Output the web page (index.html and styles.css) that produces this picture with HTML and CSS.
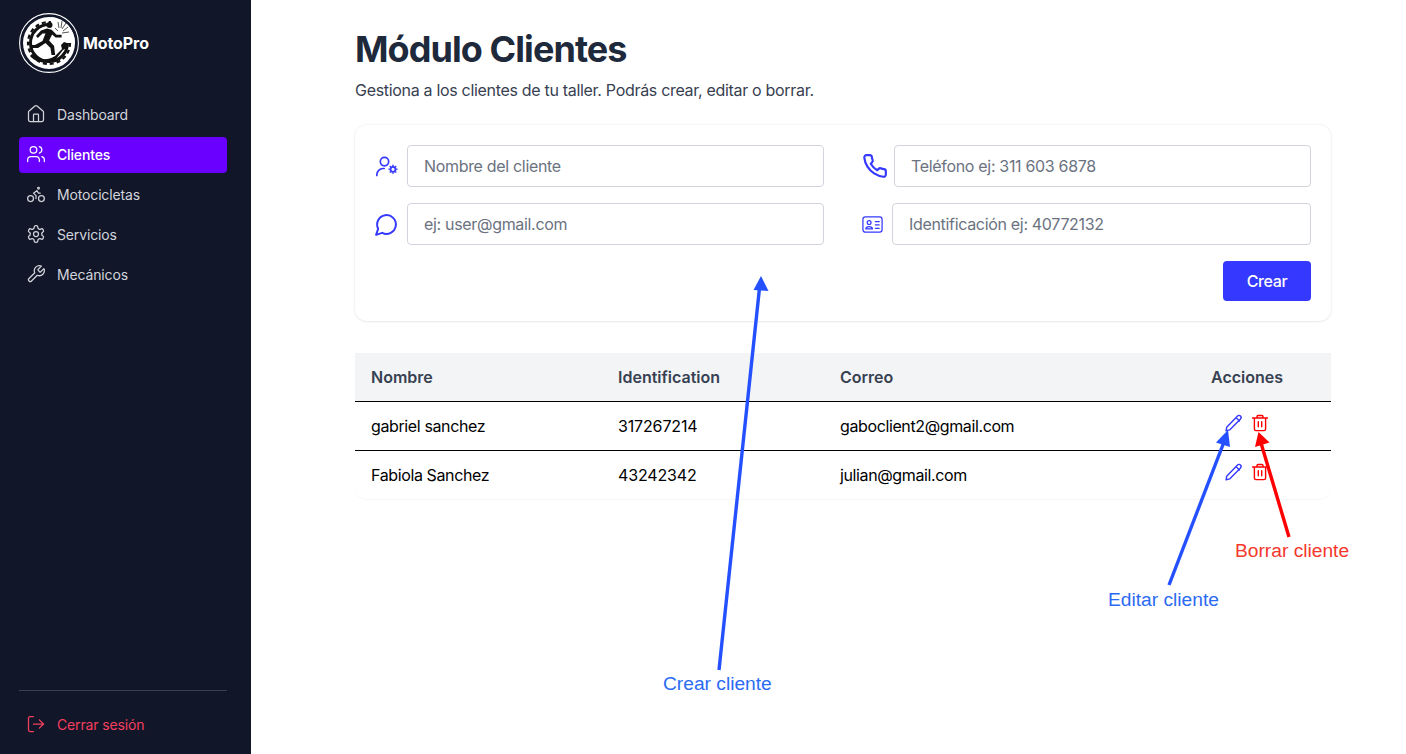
FILE: index.html
```html
<!DOCTYPE html>
<html lang="es">
<head>
<meta charset="utf-8">
<title>MotoPro - Clientes</title>
<link rel="stylesheet" href="styles.css">
</head>
<body>
<div class="app">
  <aside class="sidebar">
    <div class="brand">
      <svg class="logo" viewBox="0 0 60 60">
        <circle cx="30" cy="30" r="29.4" fill="#111629" stroke="#fff" stroke-width="1.1"/>
        <circle cx="30" cy="30" r="26" fill="#fff"/>
        <circle cx="30" cy="30" r="18.5" fill="none" stroke="#111" stroke-width="3"/>
        <circle cx="30" cy="30" r="21" fill="none" stroke="#111" stroke-width="2.2" stroke-dasharray="4 3"/>
        <path d="M32 30V4A26 26 0 0 1 55.900 30z" fill="#fff"/>
        <circle cx="30.500" cy="12" r="3" fill="#111"/>
        <path d="M28 15.500l-6 2-5 5.500 1.800 2 4.700-4.500 3 0-3 7.500-7.500 4-4.500 0 .8 3 6.700 0 7.500-5 5 5 1 7 3.600 0-1-9-5-5.500 3-6 3.500 3 6 0 0-2.800-5 0-5-5z" fill="#111"/>
        <path d="M13 41c7 6 15 7 23 2l7-7-1-4 3-3 3 1 0 5-4 2-7 9c-8 6-20 4-26-3z" fill="#111"/>
        <path d="M36 15l3 3m0-9l1 6m3-7l-1 7m5-5l-4 6m6-2l-5 4m6 1l-7 1" fill="none" stroke="#444" stroke-width=".9"/>
      </svg>
      <span class="brand-name">MotoPro</span>
    </div>
    <nav class="nav">
      <a class="nav-item">
        <svg class="ico" viewBox="0 0 24 24"><path d="M15 21v-8a1 1 0 0 0-1-1h-4a1 1 0 0 0-1 1v8"/><path d="M3 10a2 2 0 0 1 .709-1.528l7-5.999a2 2 0 0 1 2.582 0l7 5.999A2 2 0 0 1 21 10v9a2 2 0 0 1-2 2H5a2 2 0 0 1-2-2z"/></svg>
        Dashboard
      </a>
      <a class="nav-item active">
        <svg class="ico" viewBox="0 0 24 24"><path d="M16 21v-2a4 4 0 0 0-4-4H6a4 4 0 0 0-4 4v2"/><circle cx="9" cy="7" r="4"/><path d="M22 21v-2a4 4 0 0 0-3-3.870"/><path d="M16 3.130a4 4 0 0 1 0 7.750"/></svg>
        Clientes
      </a>
      <a class="nav-item">
        <svg class="ico" viewBox="0 0 24 24"><circle cx="18.500" cy="17.500" r="3.500"/><circle cx="5.500" cy="17.500" r="3.500"/><circle cx="15" cy="5" r="1"/><path d="M12 17.500V14l-3-3 4-3 2 3h2"/></svg>
        Motocicletas
      </a>
      <a class="nav-item">
        <svg class="ico" viewBox="0 0 24 24"><path d="M12.220 2h-.44a2 2 0 0 0-2 2v.18a2 2 0 0 1-1 1.730l-.43.25a2 2 0 0 1-2 0l-.15-.08a2 2 0 0 0-2.730.73l-.22.38a2 2 0 0 0 .73 2.730l.15.1a2 2 0 0 1 1 1.720v.51a2 2 0 0 1-1 1.740l-.15.09a2 2 0 0 0-.73 2.730l.22.38a2 2 0 0 0 2.730.73l.15-.08a2 2 0 0 1 2 0l.43.25a2 2 0 0 1 1 1.730V20a2 2 0 0 0 2 2h.44a2 2 0 0 0 2-2v-.18a2 2 0 0 1 1-1.730l.43-.25a2 2 0 0 1 2 0l.15.08a2 2 0 0 0 2.730-.73l.22-.39a2 2 0 0 0-.73-2.730l-.15-.08a2 2 0 0 1-1-1.740v-.5a2 2 0 0 1 1-1.740l.15-.09a2 2 0 0 0 .73-2.730l-.22-.38a2 2 0 0 0-2.730-.73l-.15.08a2 2 0 0 1-2 0l-.43-.25a2 2 0 0 1-1-1.730V4a2 2 0 0 0-2-2z"/><circle cx="12" cy="12" r="3"/></svg>
        Servicios
      </a>
      <a class="nav-item">
        <svg class="ico" viewBox="0 0 24 24"><path d="M14.700 6.300a1 1 0 0 0 0 1.400l1.600 1.600a1 1 0 0 0 1.400 0l3.770-3.770a6 6 0 0 1-7.940 7.940l-6.910 6.910a2.120 2.120 0 0 1-3-3l6.910-6.910a6 6 0 0 1 7.940-7.940l-3.760 3.760z"/></svg>
        Mecánicos
      </a>
    </nav>
    <div class="sidebar-foot">
      <a class="nav-item logout">
        <svg class="ico" viewBox="0 0 24 24"><path d="M9 21H5a2 2 0 0 1-2-2V5a2 2 0 0 1 2-2h4"/><polyline points="16 17 21 12 16 7"/><line x1="21" y1="12" x2="9" y2="12"/></svg>
        Cerrar sesión
      </a>
    </div>
  </aside>

  <main class="main">
    <h1 class="title">Módulo Clientes</h1>
    <p class="subtitle">Gestiona a los clientes de tu taller. Podrás crear, editar o borrar.</p>

    <section class="card">
      <div class="form-grid">
        <div class="field">
          <svg class="field-ico" viewBox="0 0 24 24"><circle cx="9.500" cy="7.600" r="4.200"/><path d="M1.800 21.500v-.8a6.500 6.500 0 0 1 6.200-6.200h1.200"/><circle class="gear" cx="18" cy="15.300" r="2.500"/><path class="teeth" d="M18 10.800v1.200M18 18.600v1.200M13.500 15.300h1.200M21.300 15.300h1.200M14.800 12.100l.9.9M20.300 17.600l.9.9M21.200 12.100l-.9.9M15.700 17.600l-.9.9"/></svg>
          <input class="input" type="text" placeholder="Nombre del cliente">
        </div>
        <div class="field field-phone">
          <svg class="field-ico phone-ico" viewBox="0 0 24 24"><path d="M22 16.920v3a2 2 0 0 1-2.180 2 19.790 19.790 0 0 1-8.630-3.070 19.500 19.500 0 0 1-6-6 19.790 19.790 0 0 1-3.070-8.670A2 2 0 0 1 4.110 2h3a2 2 0 0 1 2 1.720 12.840 12.840 0 0 0 .7 2.810 2 2 0 0 1-.45 2.110L8.090 9.910a16 16 0 0 0 6 6l1.270-1.270a2 2 0 0 1 2.110-.45 12.840 12.840 0 0 0 2.810.7A2 2 0 0 1 22 16.920z"/></svg>
          <input class="input" type="text" placeholder="Teléfono ej: 311 603 6878">
        </div>
        <div class="field field-msg">
          <svg class="field-ico msg-ico" viewBox="0 0 24 24"><path d="M7.900 20A9 9 0 1 0 4 16.100L2 22Z"/></svg>
          <input class="input" type="text" placeholder="ej: user@gmail.com">
        </div>
        <div class="field field-id">
          <svg class="field-ico id-ico" viewBox="0 0 24 24"><rect x="2" y="4" width="20" height="16" rx="2.500"/><circle cx="8.500" cy="10" r="2"/><path d="M5 16.500c.4-3.200 6.600-3.200 7 0zM15 9h4M15 12.500h4M15 16h4"/></svg>
          <input class="input" type="text" placeholder="Identificación ej: 40772132">
        </div>
      </div>
      <div class="form-actions">
        <button class="btn" type="button">Crear</button>
      </div>
    </section>

    <div class="table-wrap">
      <table class="table">
        <colgroup>
          <col class="col-name"><col class="col-id"><col class="col-mail"><col class="col-act">
        </colgroup>
        <thead>
          <tr><th>Nombre</th><th>Identification</th><th>Correo</th><th>Acciones</th></tr>
        </thead>
        <tbody>
          <tr>
            <td>gabriel sanchez</td><td class="num">317267214</td><td>gaboclient2@gmail.com</td>
            <td>
              <div class="actions">
                <svg class="act edit" viewBox="0 0 18 18"><path d="M1.700 13.200L12.300 2.200c1-1 2.400-1 3.200-.2s.8 2.200-.2 3.200L4.600 15.900l-3.500.9zM11 3.600l3.400 3.300"/></svg>
                <svg class="act del" viewBox="0 0 18 18"><path d="M1.500 4h15M6 4V2.600A1.100 1.100 0 0 1 7.100 1.500h3.800A1.100 1.100 0 0 1 12 2.600V4M3.400 4v11a1.600 1.600 0 0 0 1.600 1.600h8a1.600 1.600 0 0 0 1.600-1.600V4M7.300 7.800v5M10.700 7.800v5"/></svg>
              </div>
            </td>
          </tr>
          <tr>
            <td>Fabiola Sanchez</td><td class="num">43242342</td><td>julian@gmail.com</td>
            <td>
              <div class="actions">
                <svg class="act edit" viewBox="0 0 18 18"><path d="M1.700 13.200L12.300 2.200c1-1 2.400-1 3.200-.2s.8 2.200-.2 3.200L4.600 15.900l-3.500.9zM11 3.600l3.400 3.300"/></svg>
                <svg class="act del" viewBox="0 0 18 18"><path d="M1.500 4h15M6 4V2.600A1.100 1.100 0 0 1 7.100 1.500h3.800A1.100 1.100 0 0 1 12 2.600V4M3.400 4v11a1.600 1.600 0 0 0 1.600 1.600h8a1.600 1.600 0 0 0 1.600-1.600V4M7.300 7.800v5M10.700 7.800v5"/></svg>
              </div>
            </td>
          </tr>
        </tbody>
      </table>
    </div>
  </main>
</div>

<svg class="arrows" viewBox="0 0 1406 754">
  <line x1="719" y1="670" x2="759.500" y2="288" class="arrow-blue"/>
  <polygon points="761,276 753.500,290 768.500,291" class="fill-blue"/>
  <line x1="1169" y1="585" x2="1224" y2="442" class="arrow-blue"/>
  <polygon points="1228,430 1216,442.500 1230,447" class="fill-blue"/>
  <line x1="1289" y1="537" x2="1261" y2="443" class="arrow-red"/>
  <polygon points="1258.500,432 1255,447 1269.500,442.500" class="fill-red"/>
</svg>
<span class="note note-crear">Crear cliente</span>
<span class="note note-editar">Editar cliente</span>
<span class="note note-borrar">Borrar cliente</span>
</body>
</html>
```
FILE: styles.css
```css
* { box-sizing: border-box; }
html, body { margin: 0; height: 100%; }
body {
  font-family: Inter, "Liberation Sans", sans-serif;
  background: #fff;
  overflow: hidden;
  position: relative;
}
.app { display: flex; height: 754px; }

.sidebar {
  width: 251px;
  flex: none;
  background: #111629;
  padding: 13px 24px 11px 19px;
  display: flex;
  flex-direction: column;
}
.brand { display: flex; align-items: center; gap: 4px; margin-bottom: 24px; }
.logo { width: 60px; height: 60px; flex: none; }
.brand-name { color: #fff; font-size: 16px; font-weight: 700; letter-spacing: -0.1px; }
.nav { display: flex; flex-direction: column; gap: 4px; }
.nav-item {
  display: flex;
  align-items: center;
  gap: 11px;
  height: 36px;
  padding: 0 0 2px 7px;
  border-radius: 4px;
  color: #d1d5db;
  font-size: 14px;
  font-weight: 400;
  letter-spacing: -0.15px;
}
.nav-item.active { background: #6a00ff; color: #fff; font-weight: 500; }
.ico {
  width: 20px; height: 20px; flex: none;
  fill: none; stroke: currentColor; stroke-width: 1.5;
  stroke-linecap: round; stroke-linejoin: round;
}
.sidebar-foot { margin-top: auto; border-top: 1px solid #374151; padding-top: 16px; }
.logout { color: #f43f5e; }

.main { flex: 1; padding: 27px 75px 0 104px; min-width: 0; }
.title {
  margin: 0;
  font-size: 36px;
  line-height: 44px;
  font-weight: 700;
  letter-spacing: -0.93px;
  color: #1e293b;
}
.subtitle {
  margin: 7px 0 0;
  font-size: 16px;
  line-height: 24px;
  letter-spacing: -0.31px;
  color: #374151;
}
.card {
  margin-top: 23px;
  height: 196px;
  padding: 20px;
  border-radius: 12px;
  background: #fff;
  box-shadow: 0 0 3px rgba(0,0,0,.09), 0 1px 2px rgba(0,0,0,.06);
}
.form-grid {
  display: grid;
  grid-template-columns: 449px 449px;
  column-gap: 38px;
  row-gap: 16px;
}
.field { display: flex; align-items: center; gap: 8px; }
.field-phone { gap: 6px; }
.field-msg { margin-left: -1px; }
.field-id { gap: 8px; margin-left: -1px; }
.field-ico {
  width: 24px; height: 24px; flex: none;
  fill: none; stroke: #3538ff; stroke-width: 1.7;
  stroke-linecap: round; stroke-linejoin: round;
}
.phone-ico { width: 26px; height: 26px; stroke-width: 2; }
.msg-ico { width: 25px; height: 25px; stroke-width: 1.9; }
.id-ico { width: 23px; height: 23px; stroke-width: 1.3; }
.gear { stroke-width: 1.8; }
.teeth { stroke-width: 1.5; stroke-linecap: butt; }
.input {
  flex: 1;
  min-width: 0;
  height: 42px;
  padding: 0 16px;
  border: 1px solid #d1d5db;
  border-radius: 4px;
  background: #fff;
  font: 400 16px Inter, "Liberation Sans", sans-serif;
  letter-spacing: -0.32px;
  color: #111827;
  outline: none;
}
.input::placeholder { color: #6b7280; opacity: 1; }
.form-actions { display: flex; justify-content: flex-end; margin-top: 16px; }
.btn {
  width: 88px;
  height: 40px;
  border: 0;
  border-radius: 4px;
  background: #3538ff;
  color: #fff;
  font: 500 16px Inter, "Liberation Sans", sans-serif;
  letter-spacing: -0.35px;
}
.table-wrap {
  margin-top: 32px;
  border-radius: 0 0 12px 12px;
  box-shadow: 0 1px 1px rgba(0,0,0,.04);
  overflow: hidden;
}
.table { width: 100%; table-layout: fixed; border-collapse: collapse; font-size: 16px; }
.col-name { width: 247px; }
.col-id { width: 222px; }
.col-mail { width: 371px; }
.col-act { width: 136px; }
.table th {
  height: 48px;
  padding: 0 16px;
  background: #f3f4f6;
  color: #374151;
  font-weight: 600;
  text-align: left;
  border-bottom: 1px solid #000;
}
.table td {
  height: 49px;
  padding: 0 16px;
  color: #000;
  letter-spacing: -0.38px;
  border-bottom: 1px solid #000;
}
.table td.num { letter-spacing: -0.15px; }
.table tbody tr:last-child td { border-bottom: 0; height: 49px; }
.actions { display: flex; align-items: center; gap: 8px; margin: -6px 0 0 14px; }
.act {
  width: 18px; height: 18px; flex: none;
  fill: none; stroke-width: 1.4;
  stroke-linecap: round; stroke-linejoin: round;
}
.edit { stroke: #3538ff; }
.del { stroke: #f00; }

.arrows { position: absolute; left: 0; top: 0; width: 1406px; height: 754px; pointer-events: none; }
.arrow-blue { stroke: #2450ff; stroke-width: 3.4; }
.arrow-red { stroke: #f00; stroke-width: 3.4; }
.fill-blue { fill: #2450ff; }
.fill-red { fill: #f00; }
.note {
  position: absolute;
  font-family: "Liberation Sans", Arial, sans-serif;
  font-size: 19.2px;
  line-height: 22px;
  white-space: nowrap;
}
.note-crear { left: 663px; top: 673px; color: #2b6bf3; }
.note-editar { left: 1108px; top: 589px; color: #2b6bf3; }
.note-borrar { left: 1235px; top: 540px; color: #f5372c; }
```
